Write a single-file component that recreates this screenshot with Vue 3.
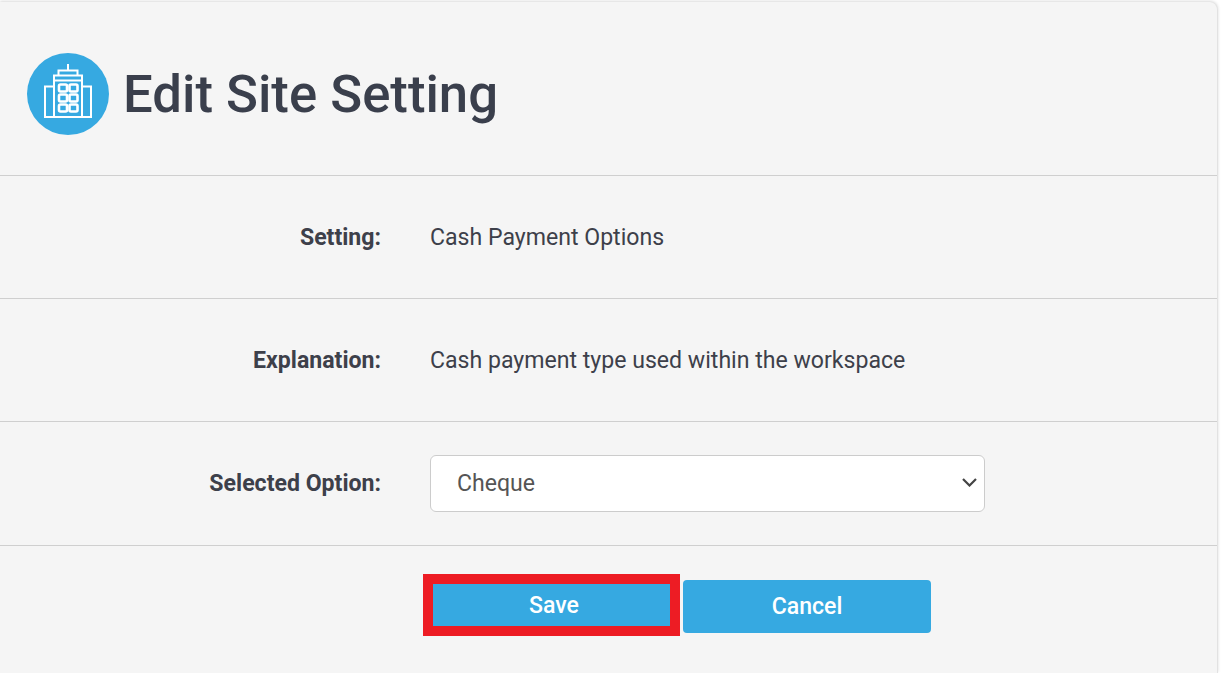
<script setup>
const rows = [
  { label: 'Setting:', value: 'Cash Payment Options' },
  { label: 'Explanation:', value: 'Cash payment type used within the workspace' }
]
</script>

<template>
  <main class="card">
    <header class="head">
      <span class="badge">
        <svg width="48" height="54" viewBox="0 0 48 54" fill="none" stroke="#fff" stroke-width="2">
          <path d="M24 0v6.500" />
          <path d="M14.500 11V6.500h19V11" />
          <path d="M10 53V11.500h28V53" />
          <path d="M10 16.500h28" />
          <path d="M10 22.500H1V53h46V22.500h-9" />
          <rect x="15" y="20.500" width="8" height="7" rx="1.500" stroke-width="2.600" />
          <rect x="25.500" y="20.500" width="8" height="7" rx="1.500" stroke-width="2.600" />
          <rect x="15" y="30.500" width="8" height="7" rx="1.500" stroke-width="2.600" />
          <rect x="25.500" y="30.500" width="8" height="7" rx="1.500" stroke-width="2.600" />
          <rect x="15" y="40.500" width="8" height="7" rx="1.500" stroke-width="2.600" />
          <rect x="25.500" y="40.500" width="8" height="7" rx="1.500" stroke-width="2.600" />
        </svg>
      </span>
      <h1>Edit Site Setting</h1>
    </header>
    <div v-for="row in rows" :key="row.label" class="row">
      <label>{{ row.label }}</label>
      <span class="value">{{ row.value }}</span>
    </div>
    <div class="row last">
      <label>Selected Option:</label>
      <span class="select-wrap">
        <select>
          <option>Cheque</option>
        </select>
        <svg class="chev" width="15" height="9" viewBox="0 0 15 9" fill="none" stroke="#444" stroke-width="2.200">
          <path d="M1 1l6.500 6.500L14 1" />
        </svg>
      </span>
    </div>
    <footer class="actions">
      <button class="btn save">Save</button>
      <button class="btn cancel">Cancel</button>
    </footer>
  </main>
</template>

<style>
html, body { background: #fff; overflow: hidden; }
</style>

<style scoped>
.card {
  box-sizing: border-box;
  width: 1218px;
  height: 671px;
  margin-top: 2px;
  background: #f5f5f5;
  border-right: 1px solid #e2e2e2;
  border-top-right-radius: 8px;
  box-shadow: 0 -1px 3px rgba(0, 0, 0, .15);
  font-family: Roboto, sans-serif;
  color: #3d404a;
}
.head {
  box-sizing: border-box;
  height: 174px;
  padding: 51px 0 0 27px;
  display: flex;
  align-items: flex-start;
  gap: 14px;
  border-bottom: 1px solid #cfcfcf;
}
.badge {
  width: 82px;
  height: 82px;
  border-radius: 50%;
  background: #36a9e1;
  display: flex;
  align-items: center;
  justify-content: center;
}
.badge svg { margin-bottom: 6px; }
h1 {
  margin: 0;
  font-size: 52.700px;
  font-weight: 500;
  line-height: 82px;
  color: #3a3f4c;
}
.row {
  box-sizing: border-box;
  height: 123px;
  display: flex;
  align-items: center;
  border-bottom: 1px solid #cfcfcf;
  font-size: 23.100px;
}
.row.last { height: 124px; }
.row label {
  width: 381px;
  text-align: right;
  font-weight: 700;
  margin-right: 49px;
}
.value { font-weight: 400; }
.select-wrap {
  position: relative;
  display: block;
  width: 555px;
  height: 57px;
}
select {
  box-sizing: border-box;
  width: 100%;
  height: 100%;
  padding: 0 26px;
  appearance: none;
  background: #fff;
  border: 1px solid #ccc;
  border-radius: 6px;
  font: 400 23.100px Roboto, sans-serif;
  color: #555;
}
.chev {
  position: absolute;
  left: 532px;
  top: 23px;
  pointer-events: none;
}
.actions {
  display: flex;
  align-items: flex-start;
  gap: 3px;
  padding: 28px 0 0 423px;
}
.btn {
  box-sizing: border-box;
  height: 53px;
  border: 0;
  padding: 0;
  color: #fff;
  background: #36a9e1;
  font: 500 23.100px Roboto, sans-serif;
}
.save {
  width: 257px;
  height: 62px;
  border: 10px solid #ed1c24;
  padding-left: 5px;
}
.cancel {
  width: 248px;
  margin-top: 6px;
  border-radius: 4px;
}
</style>
